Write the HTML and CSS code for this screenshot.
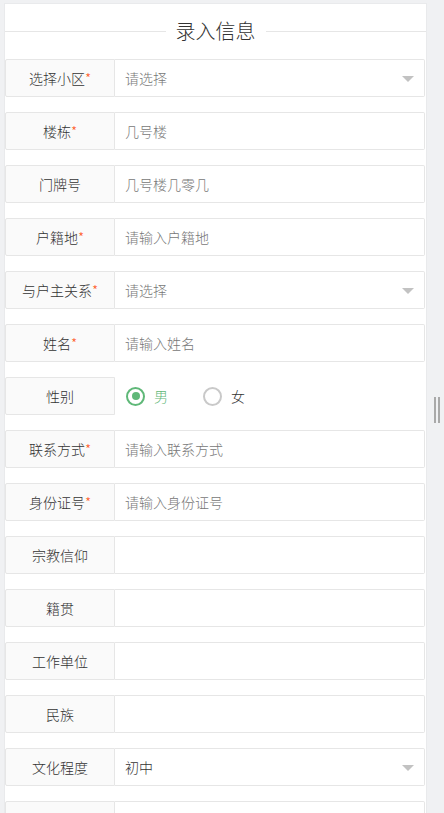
FILE: index.html
```html
<!DOCTYPE html>
<html lang="zh-CN">
<head>
    <meta charset="UTF-8">
    <meta name="viewport" content="width=device-width, initial-scale=1.0">
    <title>录入信息</title>
    <link rel="stylesheet" href="styles.css">
</head>
<body>
    <div class="page">
        <div class="card">
            <div class="field-title"><span>录入信息</span></div>

            <form class="form-pane">
                <div class="form-item">
                    <label class="form-label">选择小区<i class="req">*</i></label>
                    <div class="input-block select">
                        <span class="placeholder">请选择</span>
                        <span class="edge"></span>
                    </div>
                </div>
                <div class="form-item">
                    <label class="form-label">楼栋<i class="req">*</i></label>
                    <div class="input-block"><input type="text" placeholder="几号楼"></div>
                </div>
                <div class="form-item">
                    <label class="form-label">门牌号</label>
                    <div class="input-block"><input type="text" placeholder="几号楼几零几"></div>
                </div>
                <div class="form-item">
                    <label class="form-label">户籍地<i class="req">*</i></label>
                    <div class="input-block"><input type="text" placeholder="请输入户籍地"></div>
                </div>
                <div class="form-item">
                    <label class="form-label">与户主关系<i class="req">*</i></label>
                    <div class="input-block select">
                        <span class="placeholder">请选择</span>
                        <span class="edge"></span>
                    </div>
                </div>
                <div class="form-item">
                    <label class="form-label">姓名<i class="req">*</i></label>
                    <div class="input-block"><input type="text" placeholder="请输入姓名"></div>
                </div>
                <div class="form-item">
                    <label class="form-label">性别</label>
                    <div class="radio-block">
                        <span class="radio checked"><i class="dot"></i>男</span>
                        <span class="radio"><i class="dot"></i>女</span>
                    </div>
                </div>
                <div class="form-item">
                    <label class="form-label">联系方式<i class="req">*</i></label>
                    <div class="input-block"><input type="text" placeholder="请输入联系方式"></div>
                </div>
                <div class="form-item">
                    <label class="form-label">身份证号<i class="req">*</i></label>
                    <div class="input-block"><input type="text" placeholder="请输入身份证号"></div>
                </div>
                <div class="form-item">
                    <label class="form-label">宗教信仰</label>
                    <div class="input-block"><input type="text"></div>
                </div>
                <div class="form-item">
                    <label class="form-label">籍贯</label>
                    <div class="input-block"><input type="text"></div>
                </div>
                <div class="form-item">
                    <label class="form-label">工作单位</label>
                    <div class="input-block"><input type="text"></div>
                </div>
                <div class="form-item">
                    <label class="form-label">民族</label>
                    <div class="input-block"><input type="text"></div>
                </div>
                <div class="form-item">
                    <label class="form-label">文化程度</label>
                    <div class="input-block select">
                        <span class="value">初中</span>
                        <span class="edge"></span>
                    </div>
                </div>
                <div class="form-item">
                    <label class="form-label"></label>
                    <div class="input-block"><input type="text"></div>
                </div>
            </form>
        </div>
        <div class="grip"></div>
    </div>
</body>
</html>
```

FILE: styles.css
```css
html, body {
    margin: 0;
    padding: 0;
    height: 100%;
    overflow: hidden;
}
body {
    font-family: "Noto Sans CJK SC", "Microsoft YaHei", sans-serif;
    font-size: 14px;
    color: #333;
    background: #f0f1f3;
}
.page {
    position: relative;
    height: 813px;
    overflow: hidden;
    padding: 3px 0 0 4px;
    box-sizing: border-box;
}
.card {
    width: 423px;
    background: #fff;
    border: 1px solid #e9eaec;
    border-bottom: none;
    box-sizing: border-box;
    min-height: 900px;
}

/* title with rule */
.field-title {
    display: flex;
    align-items: center;
    margin-top: 13px;
    height: 28px;
}
.field-title::before,
.field-title::after {
    content: "";
    flex: 1;
    border-top: 1px solid #e6e6e6;
}
.field-title span {
    padding: 0 10px;
    font-size: 20px;
    font-weight: 300;
    color: #333;
    line-height: 28px;
}

/* form rows */
.form-pane {
    margin-top: 14px;
}
.form-item {
    display: flex;
    height: 38px;
    margin-bottom: 15px;
}
.form-label {
    width: 110px;
    flex: none;
    box-sizing: border-box;
    border: 1px solid #e6e6e6;
    border-radius: 2px 0 0 2px;
    background: #fafafa;
    text-align: center;
    line-height: 36px;
    font-size: 14px;
    font-weight: 300;
    color: #333;
}
.req {
    font-style: normal;
    color: #ff5722;
}
.input-block {
    flex: 1;
    margin-right: 1px;
    position: relative;
}
.input-block input {
    width: 100%;
    height: 38px;
    box-sizing: border-box;
    border: 1px solid #e6e6e6;
    border-left: none;
    border-radius: 0 2px 2px 0;
    padding-left: 10px;
    font-family: inherit;
    font-size: 14px;
    font-weight: 300;
    color: #333;
    outline: none;
    background: #fff;
}
.input-block input::placeholder {
    color: #777;
}

.select {
    box-sizing: border-box;
    border: 1px solid #e6e6e6;
    border-left: none;
    border-radius: 0 2px 2px 0;
    padding-left: 10px;
    line-height: 36px;
    font-weight: 300;
}
.select .placeholder {
    color: #777;
}
.select .value {
    color: #333;
}
.select .edge {
    position: absolute;
    right: 10px;
    top: 16px;
    border-style: solid;
    border-width: 6px 6px 0;
    border-color: #c2c2c2 transparent transparent;
}

/* radios */
.radio-block {
    flex: 1;
    display: flex;
    align-items: center;
    padding-left: 11px;
    font-weight: 300;
}
.radio {
    display: flex;
    align-items: center;
    margin-right: 35px;
    color: #333;
}
.radio .dot {
    width: 19px;
    height: 19px;
    box-sizing: border-box;
    border: 2px solid #c9c9c9;
    border-radius: 50%;
    margin-right: 9px;
    position: relative;
}
.radio.checked {
    color: #5fb878;
}
.radio.checked .dot {
    border-color: #5fb878;
}
.radio.checked .dot::after {
    content: "";
    position: absolute;
    left: 3.5px;
    top: 3.5px;
    width: 8px;
    height: 8px;
    border-radius: 50%;
    background: #5fb878;
}

/* resize grip on the right strip */
.grip {
    position: absolute;
    left: 434px;
    top: 397px;
    width: 2px;
    height: 26px;
    background: #a9a9a9;
    box-shadow: 4px 0 0 #a9a9a9;
}
```
